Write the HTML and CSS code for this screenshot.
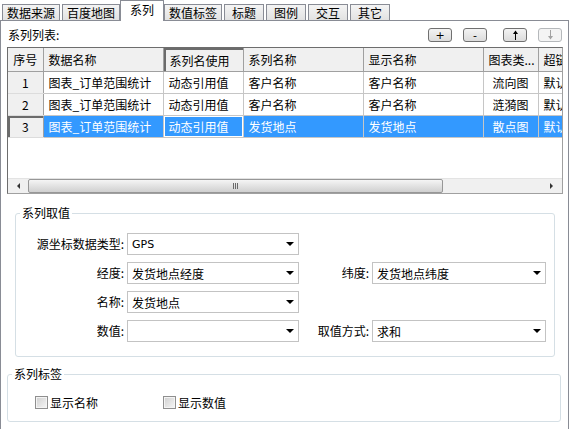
FILE: index.html
```html
<!DOCTYPE html>
<html lang="zh">
<head>
<meta charset="utf-8">
<title>系列</title>
<link rel="stylesheet" href="styles.css">
</head>
<body>
<div class="tabs">
  <div class="tab">数据来源</div>
  <div class="tab">百度地图</div>
  <div class="tab active">系列</div>
  <div class="tab">数值标签</div>
  <div class="tab">标题</div>
  <div class="tab">图例</div>
  <div class="tab">交互</div>
  <div class="tab">其它</div>
</div>
<div class="panel">
  <div class="toolbar">
    <span class="caption">系列列表:</span>
    <div class="btns">
      <button class="btn">+</button>
      <button class="btn">-</button>
      <button class="btn up"><svg width="7" height="10" viewBox="0 0 7 10"><path d="M3.5 0.5 L6 4 H1 Z" fill="#000"/><rect x="3" y="3" width="1" height="7" fill="#000"/></svg></button>
      <button class="btn" disabled><svg width="7" height="10" viewBox="0 0 7 10"><path d="M3.5 9.5 L6 6 H1 Z" fill="#a3a3a3"/><rect x="3" y="0" width="1" height="7" fill="#a3a3a3"/></svg></button>
    </div>
  </div>
  <div class="grid">
    <div class="grid-view">
      <table class="table">
        <colgroup>
          <col class="c-num"><col class="c-data"><col class="c-use"><col class="c-name"><col class="c-show"><col class="c-type"><col class="c-link">
        </colgroup>
        <thead>
          <tr>
            <th class="num">序号</th>
            <th>数据名称</th>
            <th class="pressed">系列名使用</th>
            <th>系列名称</th>
            <th>显示名称</th>
            <th>图表类...</th>
            <th>超链接</th>
          </tr>
        </thead>
        <tbody>
          <tr>
            <td class="num">1</td>
            <td>图表_订单范围统计</td>
            <td>动态引用值</td>
            <td>客户名称</td>
            <td>客户名称</td>
            <td class="center">流向图</td>
            <td>默认</td>
          </tr>
          <tr>
            <td class="num">2</td>
            <td>图表_订单范围统计</td>
            <td>动态引用值</td>
            <td>客户名称</td>
            <td>客户名称</td>
            <td class="center">涟漪图</td>
            <td>默认</td>
          </tr>
          <tr class="selected">
            <td class="num current">3</td>
            <td>图表_订单范围统计</td>
            <td class="focus">动态引用值</td>
            <td>发货地点</td>
            <td>发货地点</td>
            <td class="center">散点图</td>
            <td>默认</td>
          </tr>
        </tbody>
      </table>
    </div>
    <div class="hscroll">
      <span class="sarrow"><i class="tri-left"></i></span>
      <span class="thumb"><i class="grip"></i></span>
      <span class="track"></span>
      <span class="sarrow"><i class="tri-right"></i></span>
    </div>
  </div>
  <fieldset class="group values">
    <legend>系列取值</legend>
    <div class="form">
      <label class="lbl">源坐标数据类型:</label>
      <div class="select"><span class="latin">GPS</span><i class="caret"></i></div>
      <span></span><span></span>
      <label class="lbl">经度:</label>
      <div class="select"><span>发货地点经度</span><i class="caret"></i></div>
      <label class="lbl">纬度:</label>
      <div class="select"><span>发货地点纬度</span><i class="caret"></i></div>
      <label class="lbl">名称:</label>
      <div class="select"><span>发货地点</span><i class="caret"></i></div>
      <span></span><span></span>
      <label class="lbl">数值:</label>
      <div class="select"><span></span><i class="caret"></i></div>
      <label class="lbl">取值方式:</label>
      <div class="select"><span>求和</span><i class="caret"></i></div>
    </div>
  </fieldset>
  <fieldset class="group labels">
    <legend>系列标签</legend>
    <div class="checks">
      <label class="check"><span class="box"></span>显示名称</label>
      <label class="check"><span class="box"></span>显示数值</label>
    </div>
  </fieldset>
</div>
</body>
</html>
```
FILE: styles.css
```css
* { box-sizing: border-box; }
html, body { margin: 0; padding: 0; }
body {
  width: 572px;
  height: 429px;
  overflow: hidden;
  background: #fff;
  font-family: "Noto Sans CJK SC", "Microsoft YaHei", sans-serif;
  font-size: 12px;
  color: #000;
}

/* tabs */
.tabs {
  display: flex;
  align-items: flex-end;
  height: 20px;
  padding-left: 2px;
  position: relative;
  z-index: 1;
}
.tab {
  height: 16px;
  min-width: 40px;
  padding: 0 4px;
  margin-right: 2px;
  border: 1px solid #898c95;
  border-bottom: none;
  background: linear-gradient(#f4f4f4, #e2e2e2);
  line-height: 15px;
  text-align: center;
  white-space: nowrap;
}
.tab.active {
  height: 21px;
  min-width: 44px;
  margin: 0 0 -1px -2px;
  background: #fff;
  line-height: 17px;
}

/* panel */
.panel {
  width: 569px;
  height: 409px;
  border: 1px solid #898c95;
  border-bottom: none;
  background: #fff;
  display: flex;
  flex-direction: column;
}

.toolbar {
  display: flex;
  align-items: center;
  height: 14px;
  margin: 7px 6px 0 7px;
}
.caption { line-height: 14px; }
.btns { margin-left: auto; display: flex; }
.btn {
  width: 24px;
  height: 14px;
  margin: 0 0 0 11px;
  padding: 0;
  border: 1px solid #707070;
  border-radius: 3px;
  background: linear-gradient(#f3f3f3, #dcdcdc);
  font-family: "DejaVu Sans", sans-serif;
  font-size: 11px;
  line-height: 11px;
  color: #000;
  display: flex;
  align-items: center;
  justify-content: center;
}
.btn.up { margin-left: 16px; }
.btn:disabled { border-color: #b5b8bb; background: #f4f4f4; }
.btn svg { display: block; }

/* grid */
.grid {
  margin: 5px 5px 0 6px;
  height: 147px;
  border: 1px solid;
  border-color: #6d6d6d #a0a0a0 #a0a0a0 #6d6d6d;
  display: flex;
  flex-direction: column;
  background: #fff;
}
.grid-view { flex: 1; overflow: hidden; }
.table {
  border-collapse: collapse;
  table-layout: fixed;
  width: 590px;
}
.c-num { width: 35px; }
.c-data { width: 120px; }
.c-use { width: 80px; }
.c-name { width: 120px; }
.c-show { width: 120px; }
.c-type { width: 55px; }
.c-link { width: 60px; }
.table tr { height: 22px; }
.table th, .table td {
  height: 22px;
  padding: 0 0 0 5px;
  text-align: left;
  font-weight: normal;
  white-space: nowrap;
  overflow: hidden;
  border: 1px solid #c6c6c6;
  line-height: 20px;
}
.table thead tr:first-child th { border-top: none; }
.table th {
  background: #f0f0f0;
  border-color: #a0a0a0;
  border-top-color: #f0f0f0;
}
.table th:first-child, .table td:first-child { border-left: none; }
.table .num { text-align: center; padding: 0; background: #f0f0f0; }
.table td.num { border-color: #dcdcdc; border-right-color: #a0a0a0; }
.table th.pressed { box-shadow: inset 2px 2px 0 #6b6b6b; padding-top: 3px; padding-left: 6px; }
.table .center { text-align: center; padding: 0; }
.table .selected td { background: #3399ff; color: #fff; }
.table .selected td.num { background: #f0f0f0; color: #000; box-shadow: inset 2px 2px 0 #6b6b6b; }
.table .selected td.focus { box-shadow: inset 0 0 0 1px #fff; }

.hscroll {
  height: 15px;
  display: flex;
  background: #f0f0f0;
  border-top: 1px solid #e3e3e3;
}
.sarrow {
  width: 20px;
  display: flex;
  align-items: center;
  justify-content: center;
}
.sarrow:last-child { width: 16px; justify-content: flex-start; padding-left: 4px; }
.tri-left { width: 0; height: 0; border-top: 3px solid transparent; border-bottom: 3px solid transparent; border-right: 3px solid #333; }
.tri-right { width: 0; height: 0; border-top: 3px solid transparent; border-bottom: 3px solid transparent; border-left: 3px solid #333; }
.thumb {
  width: 415px;
  border: 1px solid #979797;
  border-radius: 2px;
  background: linear-gradient(#f5f5f5, #e2e2e2 50%, #d0d0d0);
  display: flex;
  align-items: center;
  justify-content: center;
}
.grip {
  width: 5px;
  height: 6px;
  background: repeating-linear-gradient(90deg, #6a6a6a 0 1px, transparent 1px 2px);
}
.track { flex: 1; }

/* group boxes */
.group {
  border: 1px solid #d5dfe5;
  border-radius: 3px;
  margin: 0;
  padding: 0;
  min-width: 0;
}
.group legend {
  margin-left: 4px;
  padding: 0 2px;
  line-height: 14px;
  font-size: 12px;
}
.values { margin: 12px 13px 0 14px; padding: 13px 0 14px 0; }
.labels { margin: 10px 7px 0 6px; padding: 14px 0 11px 0; }

.form {
  display: grid;
  grid-template-columns: 111px 172px 73px 174px;
  grid-auto-rows: 22px;
  row-gap: 7px;
}
.lbl {
  text-align: right;
  padding-right: 3px;
  line-height: 22px;
  white-space: nowrap;
}
.form .lbl:nth-of-type(odd) { }
.select {
  height: 22px;
  border: 1px solid #c3c3c3;
  background: #fff;
  display: flex;
  align-items: center;
  padding-left: 4px;
}
.select .latin { font-family: "DejaVu Sans", sans-serif; font-size: 11px; }
.caret {
  margin-left: auto;
  margin-right: 4px;
  width: 0;
  height: 0;
  border-left: 4px solid transparent;
  border-right: 4px solid transparent;
  border-top: 4px solid #000;
}

.checks { display: flex; padding-left: 27px; }
.check {
  width: 128px;
  display: flex;
  align-items: center;
  line-height: 15px;
}
.box {
  width: 13px;
  height: 13px;
  margin-right: 2px;
  border: 1px solid #8f8f8f;
  background: linear-gradient(135deg, #cfcfcf, #f6f6f6);
  box-shadow: inset 0 0 0 1px #f4f4f4;
}
```
